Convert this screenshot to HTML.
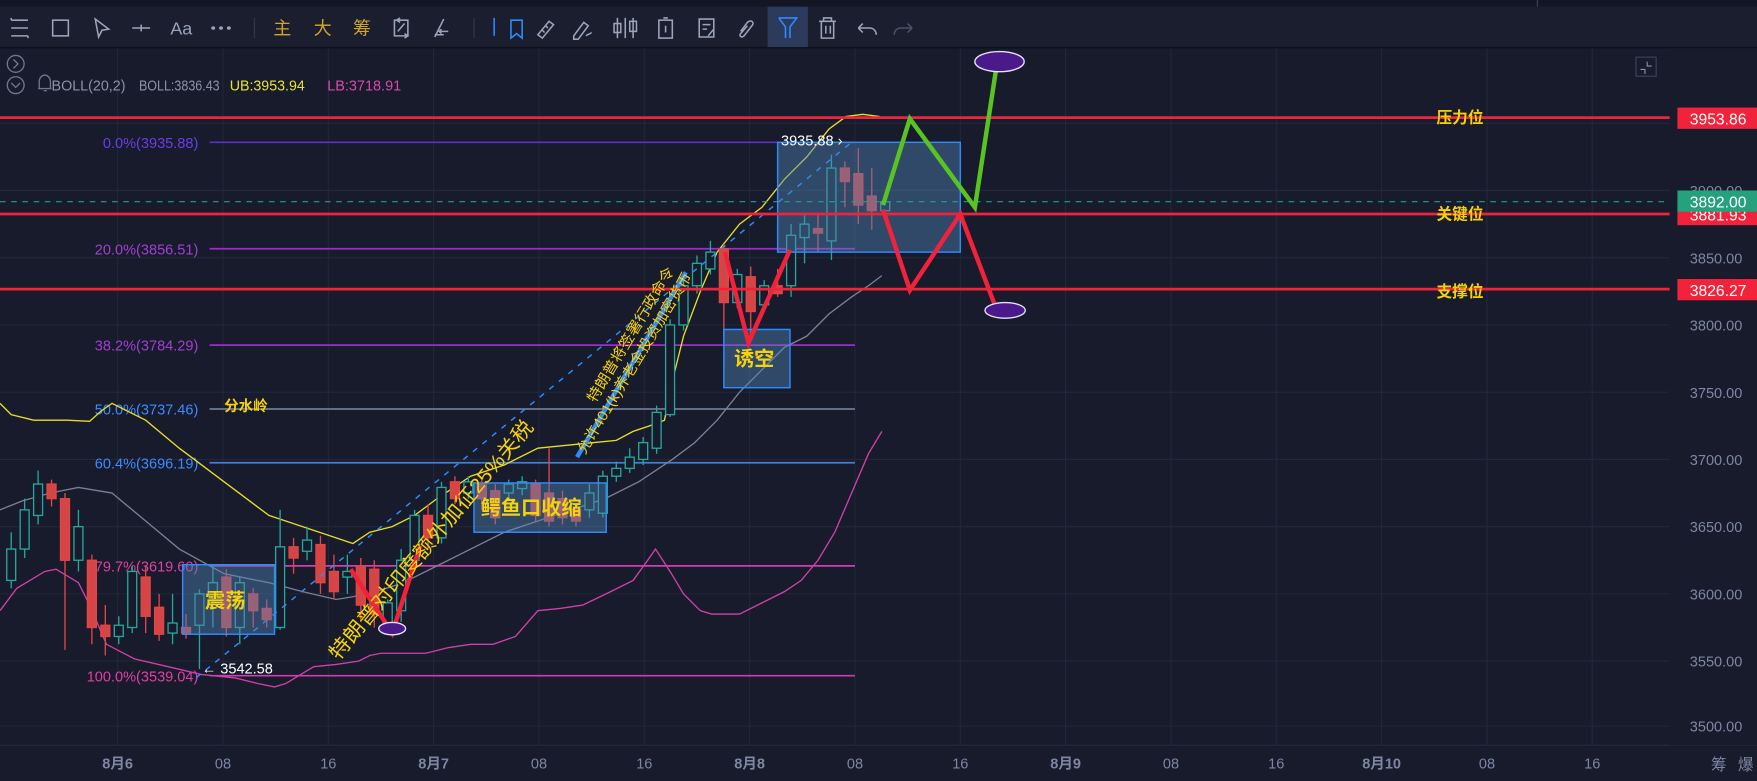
<!DOCTYPE html>
<html><head><meta charset="utf-8"><style>
html,body{margin:0;padding:0;background:#171b2c;overflow:hidden}
svg{display:block}
text{font-family:"Liberation Sans","Noto Sans CJK SC",sans-serif}
</style></head><body>
<svg width="1757" height="781" viewBox="0 0 1568 697" preserveAspectRatio="none" xmlns="http://www.w3.org/2000/svg">
<rect width="1568" height="697" fill="#171b2c"/>
<rect x="0" y="0" width="1568" height="6" fill="#131725"/>
<rect x="0" y="6" width="1568" height="36" fill="#1a1e2f"/>
<line x1="0" y1="42.5" x2="1568" y2="42.5" stroke="#0e111c" stroke-width="1.5"/>
<rect x="685" y="6" width="36" height="36" fill="#2c3b5c"/>
<g fill="none" stroke="#9aa3b8" stroke-width="1.4">
<path d="M10 18h15M10 25h15M10 32h15M10 18v-2M25 32v2"/>
<rect x="47" y="18" width="14" height="14"/>
<path d="M85 17l12 9-6 1-3 6z"/>
<path d="M118 25h16M126 22v6"/>
<path d="M190 25h.5M197 25h.5M204 25h.5" stroke-width="3" stroke-linecap="round"/>
<path d="M352 18h12v14h-12zM355 28l6-7M357 16l-3 2 3 2M361 34l3-2-3-2"/>
<path d="M388 33l8-16M392 28h8M394 26l-2 2 2 2M396 31h-8"/>
<path d="M456 18h10v16l-5-4-5 4z" stroke="#2e8bff"/>
<path d="M441 16v16" stroke="#2e8bff"/>
<path d="M480 31l10-12 4 3-10 12zM484 27l2 2M487 23l2 2"/>
<path d="M512 32l9-12 4 3-9 12h-4zM523 32c2-2 3-1 5-3"/>
<path d="M551 16v18M558 16v18M565 16v18"/><rect x="548" y="21" width="6" height="8"/><rect x="562" y="19" width="6" height="9"/>
<rect x="588" y="18" width="12" height="16"/><path d="M592 16h4M594 23v6"/>
<path d="M624 17h13v16h-13zM627 22h7M627 26h4M632 32l5-6"/>
<path d="M661 28l6-8c3-3 7 0 4 3l-7 9c-2 2-5 0-3-2l6-7"/>
<path d="M695 16h16l-6 8v10M695 16l6 8v10" stroke="#2e8bff"/>
<path d="M731 19h15M735 19v-3h7v3M733 19v15h11v-15M737 23v7M741 23v7"/>
<path d="M766 25h10c4 0 6 3 6 6M766 25l4-4M766 25l4 4"/>
<path d="M814 25h-10c-4 0-6 3-6 6M814 25l-4-4M814 25l-4 4" stroke="#4a5166"/>
</g>
<text x="152" y="31" font-size="16" fill="#9aa3b8">Aa</text>
<line x1="227" y1="16" x2="227" y2="34" stroke="#343a4e"/>
<line x1="423" y1="16" x2="423" y2="34" stroke="#343a4e"/>
<text x="244" y="31" font-size="16" fill="#d4a52a">主</text>
<text x="280" y="31" font-size="16" fill="#d4a52a">大</text>
<text x="315" y="31" font-size="16" fill="#d4a52a">筹</text>
<line x1="1372" y1="0" x2="1372" y2="6" stroke="#3a4155"/>

<g stroke="#222739" stroke-width="1">
<path d="M105 43V665M199 43V665M293 43V665M387 43V665M481 43V665M575 43V665M669 43V665M763 43V665M857 43V665M951 43V665M1045 43V665M1139 43V665M1233 43V665M1327 43V665M1421 43V665"/>
<path d="M0 110H1490M0 170H1490M0 230H1490M0 290H1490M0 350H1490M0 410H1490M0 470H1490M0 530H1490M0 590H1490M0 648H1490"/>
</g>
<line x1="0" y1="665" x2="1568" y2="665" stroke="#262b3d"/>

<g fill="none" stroke="#6f778c" stroke-width="1.2">
<circle cx="14" cy="57" r="7.5"/><path d="M12 53l4 4-4 4"/>
<circle cx="14" cy="76" r="7.5"/><path d="M10 74l4 4 4-4"/>
<path d="M35 79v-6c0-4 3-6 5-6s5 2 5 6v6h-11M46 79h-12M39 81h3"/>
</g>
<text x="46" y="81" font-size="13" fill="#8a92a8" textLength="66" lengthAdjust="spacingAndGlyphs">BOLL(20,2)</text>
<text x="124" y="81" font-size="13" fill="#8a92a8" textLength="72" lengthAdjust="spacingAndGlyphs">BOLL:3836.43</text>
<text x="205" y="81" font-size="13" fill="#e8e03a" textLength="67" lengthAdjust="spacingAndGlyphs">UB:3953.94</text>
<text x="292" y="81" font-size="13" fill="#d84aa8" textLength="66" lengthAdjust="spacingAndGlyphs">LB:3718.91</text>
<rect x="1460" y="51" width="18" height="17" fill="none" stroke="#3a4360"/>
<path d="M1464 62h4v4M1470 55v4h4" fill="none" stroke="#8a92a8"/>

<g stroke-width="1.5">
<line x1="187" y1="127" x2="763" y2="127" stroke="#5b2fd0"/>
<line x1="187" y1="222" x2="763" y2="222" stroke="#9a2fc4"/>
<line x1="187" y1="308" x2="763" y2="308" stroke="#9a2fc4"/>
<line x1="187" y1="365" x2="763" y2="365" stroke="#6d7a92"/>
<line x1="187" y1="413" x2="763" y2="413" stroke="#3d7fe0"/>
<line x1="187" y1="505" x2="763" y2="505" stroke="#d43ab4"/>
<line x1="187" y1="603" x2="763" y2="603" stroke="#d43ab4"/>
</g>
<g font-size="13" text-anchor="end">
<text x="177" y="132" fill="#6a3de8">0.0%(3935.88)</text>
<text x="177" y="227" fill="#a040d0">20.0%(3856.51)</text>
<text x="177" y="313" fill="#a040d0">38.2%(3784.29)</text>
<text x="177" y="370" fill="#3d8bfd">50.0%(3737.46)</text>
<text x="177" y="418" fill="#3d8bfd">60.4%(3696.19)</text>
<text x="177" y="510" fill="#e040a0">79.7%(3619.60)</text>
<text x="177" y="608" fill="#e040a0">100.0%(3539.04)</text>
</g>

<polyline fill="none" stroke="#e8dc2a" stroke-width="1.2" points="0,360 10,370 30,375 60,375 80,376 90,367 100,360 130,375 160,400 200,430 240,460 270,470 300,480 315,485 330,475 350,470 370,460 390,445 420,425 450,415 480,400 500,398 530,395 550,393 565,385 580,380 593,375 600,340 610,300 625,260 640,225 660,200 680,185 700,160 720,140 740,115 755,104 770,102 785,104"/>
<polyline fill="none" stroke="#7a8094" stroke-width="1.2" points="0,455 20,447 45,440 70,435 100,440 130,465 160,490 200,512 240,520 270,528 300,535 330,530 360,520 390,505 420,490 450,475 480,465 510,455 540,445 570,430 600,410 620,395 640,375 660,350 680,330 700,310 720,300 740,280 760,265 775,255 787,246"/>
<polyline fill="none" stroke="#d040a8" stroke-width="1.2" points="0,545 15,525 40,510 50,508 70,520 80,540 95,575 120,588 150,595 180,602 210,605 230,610 245,613 255,610 280,595 300,593 320,590 330,585 340,583 380,583 400,578 420,575 440,575 460,568 480,545 500,543 520,540 545,528 565,518 578,500 585,490 598,510 610,530 625,545 635,548 660,548 680,538 700,528 715,518 730,500 745,475 760,440 775,405 787,385"/>

<g stroke-width="1.2">
<g stroke="#26a69a" fill="#171b2c">
<path d="M10 475V525M22 445V498M34 420V468M70 455V510M106 550V575M118 505V565M154 530V575M178 526V597M190 505V560M214 515V575M250 455V562M274 470V500M310 495V530M346 535V562M358 490V555M370 455V505M394 430V485M418 425V445M454 428V445M466 425V442M526 432V462M538 420V462M550 412V430M562 400V422M574 390V415M586 362V405M598 285V372M610 245V295M622 228V262M634 215V245M658 240V275M682 250V278M706 200V265M718 192V235M742 138V232M790 175V192"/>
<rect x="6" y="490" width="8" height="28"/><rect x="18" y="455" width="8" height="35"/><rect x="30" y="432" width="8" height="28"/><rect x="66" y="470" width="8" height="30"/><rect x="102" y="558" width="8" height="10"/><rect x="114" y="510" width="8" height="50"/><rect x="150" y="556" width="8" height="9"/><rect x="174" y="530" width="8" height="28"/><rect x="186" y="520" width="8" height="12"/><rect x="210" y="520" width="8" height="40"/><rect x="246" y="488" width="8" height="72"/><rect x="270" y="482" width="8" height="10"/><rect x="306" y="510" width="8" height="5"/><rect x="342" y="538" width="8" height="22"/><rect x="354" y="500" width="8" height="45"/><rect x="366" y="460" width="8" height="40"/><rect x="390" y="435" width="8" height="45"/><rect x="414" y="430" width="8" height="10"/><rect x="450" y="432" width="8" height="8"/><rect x="462" y="430" width="8" height="6"/><rect x="522" y="440" width="8" height="15"/><rect x="534" y="425" width="8" height="33"/><rect x="546" y="418" width="8" height="7"/><rect x="558" y="408" width="8" height="10"/><rect x="570" y="395" width="8" height="15"/><rect x="582" y="368" width="8" height="32"/><rect x="594" y="290" width="8" height="80"/><rect x="606" y="255" width="8" height="35"/><rect x="618" y="235" width="8" height="20"/><rect x="630" y="225" width="8" height="15"/><rect x="654" y="245" width="8" height="25"/><rect x="678" y="255" width="8" height="17"/><rect x="702" y="210" width="8" height="45"/><rect x="714" y="200" width="8" height="12"/><rect x="738" y="150" width="8" height="65"/><rect x="786" y="180" width="8" height="8"/>
</g>
<g stroke="#e04646" fill="#d64545">
<path d="M46 428V452M58 440V580M82 495V575M94 540V585M130 505V565M142 530V572M166 548V570M202 508V568M226 525V560M238 535V560M262 480V512M286 478V530M298 495V535M322 498V555M334 500V560M382 450V490M406 425V450M430 428V455M442 432V468M478 428V466M490 400V470M502 438V468M514 450V470M646 218V300M670 238V300M694 240V265M730 190V225M754 144V185M766 132V200M778 150V205"/>
<rect x="42" y="432" width="8" height="13"/><rect x="54" y="445" width="8" height="55"/><rect x="78" y="500" width="8" height="60"/><rect x="90" y="558" width="8" height="10"/><rect x="126" y="515" width="8" height="35"/><rect x="138" y="542" width="8" height="24"/><rect x="162" y="560" width="8" height="5"/><rect x="198" y="515" width="8" height="45"/><rect x="222" y="530" width="8" height="15"/><rect x="234" y="543" width="8" height="10"/><rect x="258" y="488" width="8" height="10"/><rect x="282" y="486" width="8" height="34"/><rect x="294" y="510" width="8" height="18"/><rect x="318" y="505" width="8" height="35"/><rect x="330" y="508" width="8" height="40"/><rect x="378" y="460" width="8" height="20"/><rect x="402" y="430" width="8" height="15"/><rect x="426" y="432" width="8" height="13"/><rect x="438" y="438" width="8" height="24"/><rect x="474" y="432" width="8" height="28"/><rect x="486" y="440" width="8" height="25"/><rect x="498" y="445" width="8" height="17"/><rect x="510" y="455" width="8" height="10"/><rect x="642" y="222" width="8" height="48"/><rect x="666" y="247" width="8" height="31"/><rect x="690" y="255" width="8" height="7"/><rect x="726" y="204" width="8" height="4"/><rect x="750" y="150" width="8" height="12"/><rect x="762" y="155" width="8" height="28"/><rect x="774" y="175" width="8" height="13"/>
</g>
</g>

<line x1="175" y1="605" x2="760" y2="127" stroke="#2e8bff" stroke-width="1.3" stroke-dasharray="5,6"/>
<line x1="515" y1="408" x2="612" y2="243" stroke="#2e8bff" stroke-width="4"/>

<g fill="rgba(80,130,180,0.45)" stroke="#2e8bff" stroke-width="1.3">
<rect x="163" y="504" width="82" height="62"/>
<rect x="423" y="431" width="118" height="44"/>
<rect x="646" y="294" width="59" height="52"/>
<rect x="694" y="127" width="163" height="98"/>
</g>

<g stroke="#f2223a" stroke-width="2.5">
<line x1="0" y1="105" x2="1497" y2="105"/>
<line x1="0" y1="191" x2="1497" y2="191"/>
<line x1="0" y1="258" x2="1497" y2="258"/>
</g>
<line x1="0" y1="180" x2="1497" y2="180" stroke="#2a9d86" stroke-width="1" stroke-dasharray="5,5"/>

<g fill="none" stroke-width="4" stroke-linejoin="miter">
<polyline stroke="#f2223a" points="313,508 350,565 375,487"/>
<polyline stroke="#f2223a" points="647,225 668,306 705,223"/>
<polyline stroke="#f2223a" points="788,187 812,259 857,191 890,278"/>
<polyline stroke="#58c322" points="788,183 812,106 870,185 890,55"/>
</g>
<g fill="#4a1a8a" stroke="#e8e0ff" stroke-width="1.2">
<ellipse cx="350" cy="561" rx="12" ry="5.5"/>
<ellipse cx="892" cy="55" rx="22" ry="9"/>
<ellipse cx="897" cy="277" rx="18" ry="7"/>
</g>

<g font-weight="bold" fill="#f5d20a">
<text x="183" y="542" font-size="18">震荡</text>
<text x="429" y="459" font-size="18">鳄鱼口收缩</text>
<text x="655" y="326" font-size="18">诱空</text>
<text x="200" y="367" font-size="13">分水岭</text>
<text x="1282" y="110" font-size="14">压力位</text>
<text x="1282" y="196" font-size="14">关键位</text>
<text x="1282" y="265" font-size="14">支撑位</text>
</g>
<text transform="translate(302,590) rotate(-50)" font-size="18" fill="#f5d20a" textLength="272" lengthAdjust="spacingAndGlyphs">特朗普对印度额外加征25%关税</text>
<text transform="translate(531,360) rotate(-59)" font-size="13" fill="#f5d20a" textLength="138" lengthAdjust="spacingAndGlyphs">特朗普将签署行政命令</text>
<text transform="translate(522,406) rotate(-59)" font-size="13" fill="#f5d20a" textLength="186" lengthAdjust="spacingAndGlyphs">允许401(k)养老金投资加密货币</text>
<text x="180" y="601" font-size="13" fill="#ffffff">← 3542.58</text>
<text x="697" y="130" font-size="13" fill="#ffffff">3935.88 ›</text>

<rect x="1490" y="43" width="78" height="622" fill="#171b2c"/>
<g font-size="13" fill="#7d86a2">
<text x="1508" y="175">3900.00</text>
<text x="1508" y="235">3850.00</text>
<text x="1508" y="295">3800.00</text>
<text x="1508" y="355">3750.00</text>
<text x="1508" y="415">3700.00</text>
<text x="1508" y="475">3650.00</text>
<text x="1508" y="535">3600.00</text>
<text x="1508" y="595">3550.00</text>
<text x="1508" y="653">3500.00</text>
</g>
<rect x="1497" y="96" width="71" height="19" fill="#f2223a"/>
<text x="1508" y="111" font-size="14" fill="#fff">3953.86</text>
<rect x="1497" y="182" width="71" height="19" fill="#f2223a"/>
<text x="1508" y="197" font-size="14" fill="#fff">3881.93</text>
<rect x="1497" y="170" width="71" height="19" fill="#26a17e"/>
<text x="1508" y="185" font-size="14" fill="#fff">3892.00</text>
<rect x="1497" y="249" width="71" height="19" fill="#f2223a"/>
<text x="1508" y="264" font-size="14" fill="#fff">3826.27</text>

<g font-size="13" fill="#7d86a2" text-anchor="middle">
<text x="105" y="686" font-weight="bold">8月6</text>
<text x="199" y="686">08</text>
<text x="293" y="686">16</text>
<text x="387" y="686" font-weight="bold">8月7</text>
<text x="481" y="686">08</text>
<text x="575" y="686">16</text>
<text x="669" y="686" font-weight="bold">8月8</text>
<text x="763" y="686">08</text>
<text x="857" y="686">16</text>
<text x="951" y="686" font-weight="bold">8月9</text>
<text x="1045" y="686">08</text>
<text x="1139" y="686">16</text>
<text x="1233" y="686" font-weight="bold">8月10</text>
<text x="1327" y="686">08</text>
<text x="1421" y="686">16</text>
<text x="1534" y="687" font-size="14">筹</text>
<text x="1558" y="687" font-size="14">爆</text>
</g>
</svg>
</body></html>
